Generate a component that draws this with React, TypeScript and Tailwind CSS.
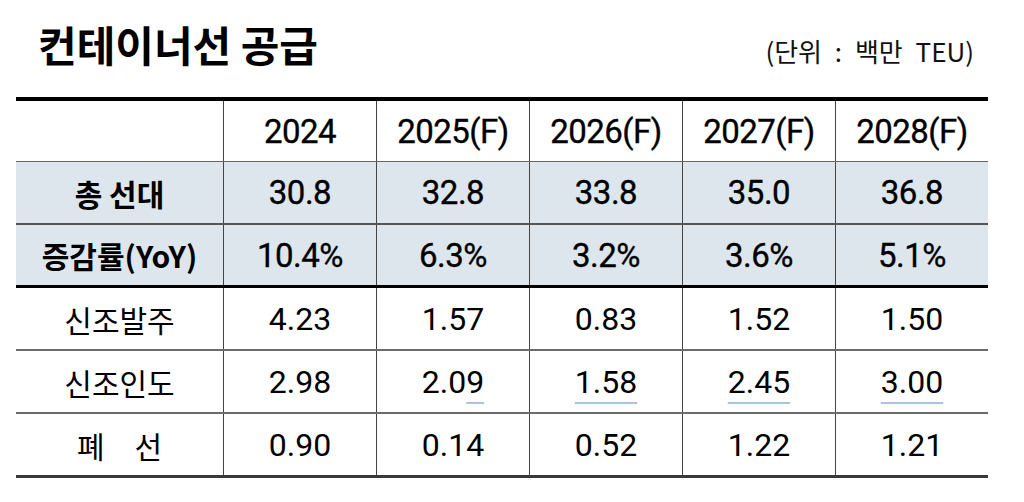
import React from 'react';

const years = ['2024', '2025(F)', '2026(F)', '2027(F)', '2028(F)'];

type Row = {
  label: React.ReactNode;
  values: React.ReactNode[];
  shaded?: boolean;
};

const ul = 'underline decoration-[#a9c4dc] decoration-2 underline-offset-[9px]';

const rows: Row[] = [
  { label: '총 선대', values: ['30.8', '32.8', '33.8', '35.0', '36.8'], shaded: true },
  { label: '증감률(YoY)', values: ['10.4%', '6.3%', '3.2%', '3.6%', '5.1%'], shaded: true },
  { label: '신조발주', values: ['4.23', '1.57', '0.83', '1.52', '1.50'] },
  {
    label: '신조인도',
    values: [
      '2.98',
      <>2.0<span className={ul}>9</span></>,
      <span className={ul}>1.58</span>,
      <span className={ul}>2.45</span>,
      <span className={ul}>3.00</span>,
    ],
  },
  { label: '폐　선', values: ['0.90', '0.14', '0.52', '1.22', '1.21'] },
];

const kr = "font-['Noto_Sans_CJK_KR','Noto_Sans',sans-serif]";
const num = "font-['Roboto','Liberation_Sans',sans-serif]";
// header and shaded figures: a touch heavier than the body rows
const strong = 'text-[33px] font-normal tracking-[-0.5px] [-webkit-text-stroke:0.35px_black]';

export default function App() {
  return (
    <div className="w-[1024px] h-[502px] bg-white text-black overflow-hidden">
      <div className="flex items-end justify-between pl-[38px] pr-[50px] pt-[23px]">
        <h1 className={`${kr} text-[42px] font-bold leading-none`}>컨테이너선 공급</h1>
        <span className={`${kr} text-[26px] leading-none pb-[1px] text-[#111] [word-spacing:7px]`}>
          (단위 : 백만 TEU)
        </span>
      </div>

      <div className="mx-[16px] mt-[32px] w-[972px] border-t-4 border-black border-b-[3px] border-b-[#3a3a3a]">
        {/* header */}
        <div className="grid grid-cols-[207px_repeat(5,153px)] h-[61px] border-b border-b-[#666]">
          <div />
          {years.map((y) => (
            <div
              key={y}
              className={`${num} ${strong} flex items-center justify-center border-l border-l-[#444] leading-none`}
            >
              {y}
            </div>
          ))}
        </div>

        {rows.map((r, i) => (
          <div
            key={i}
            className={`grid grid-cols-[207px_repeat(5,153px)] ${
              r.shaded ? 'bg-[#dce6ec]' : 'bg-white'
            } ${
              i === 0
                ? 'h-[63px] border-b-2 border-b-[#555]'
                : i === 1
                ? 'h-[63px] border-b-[3px] border-b-black'
                : i === 4
                ? 'h-[61px]'
                : 'h-[63px] border-b-2 border-b-[#6b6b6b]'
            }`}
          >
            <div
              className={`${kr} flex items-center justify-center text-[30px] leading-none ${
                r.shaded ? 'font-bold' : 'font-normal'
              }`}
            >
              {r.label}
            </div>
            {r.values.map((v, j) => (
              <div
                key={j}
                className={`${num} flex items-center justify-center border-l border-l-[#444] leading-none ${
                  r.shaded ? strong : 'text-[32px] font-normal'
                }`}
              >
                <span>{v}</span>
              </div>
            ))}
          </div>
        ))}
      </div>
    </div>
  );
}
